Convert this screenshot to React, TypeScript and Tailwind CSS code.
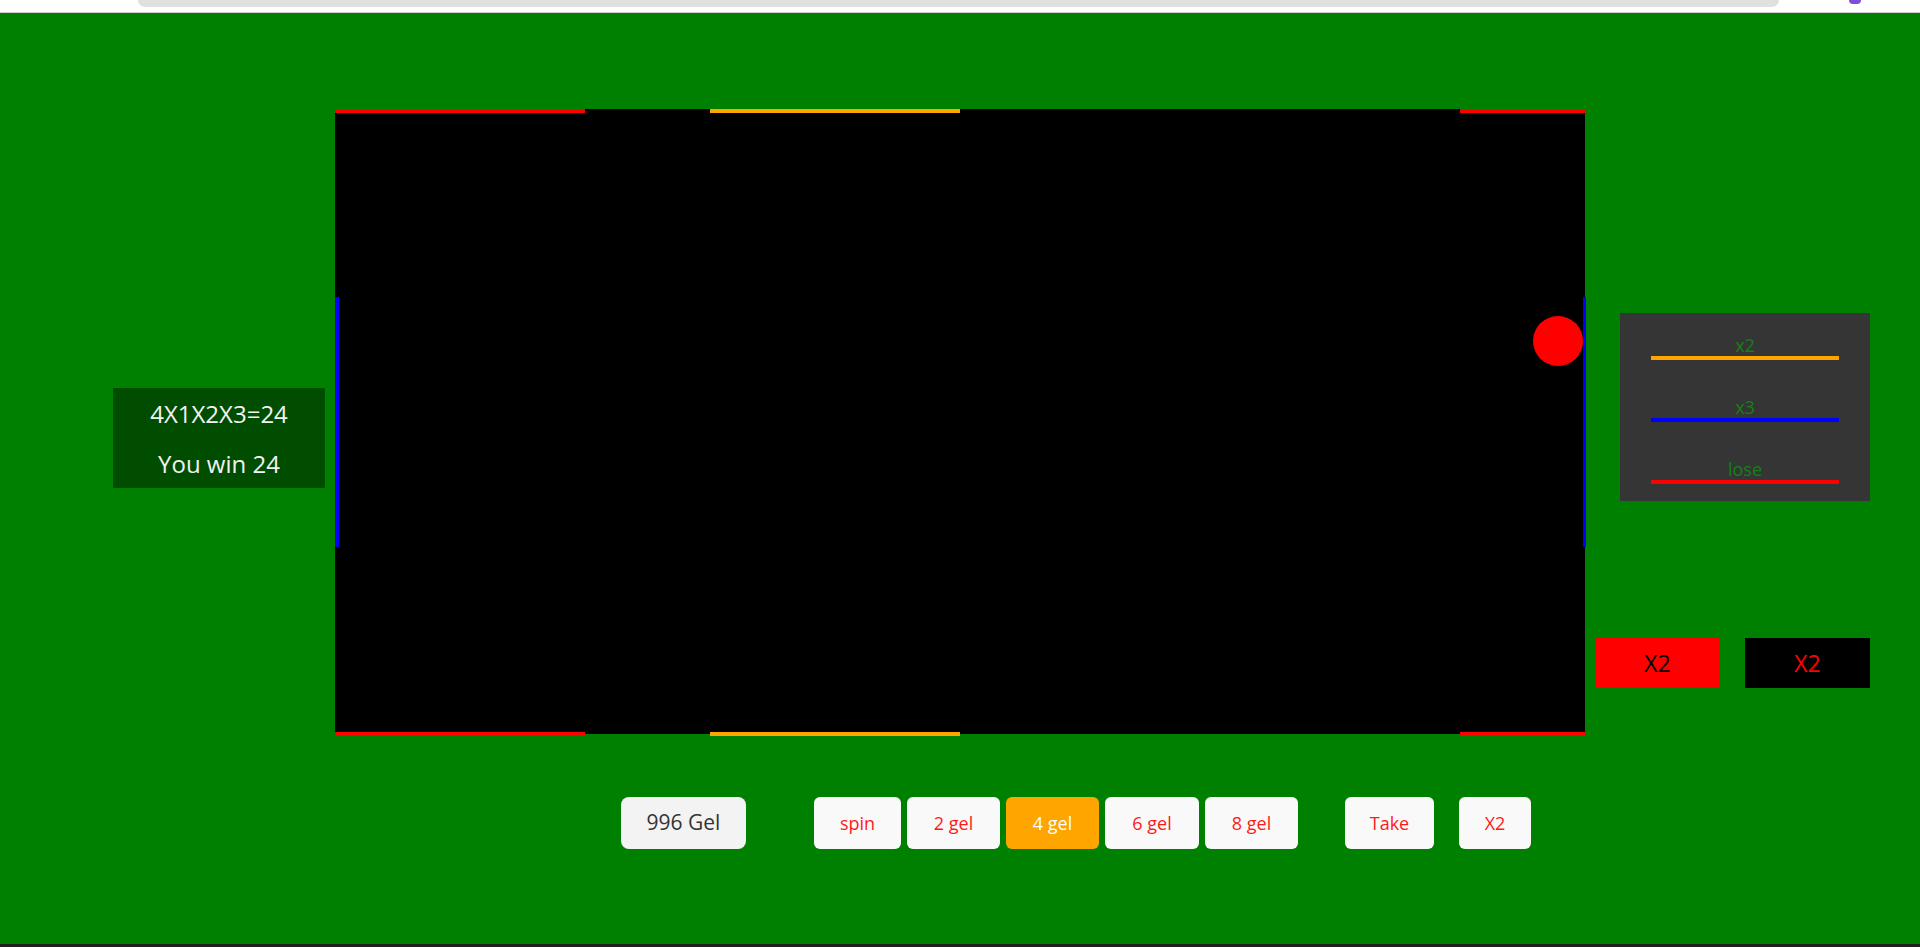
const FONT = "font-['Open_Sans','Liberation_Sans',sans-serif]";

const BETS = [
  { label: "spin", w: "w-[87px]", active: false },
  { label: "2 gel", w: "w-[93px]", active: false },
  { label: "4 gel", w: "w-[93px]", active: true },
  { label: "6 gel", w: "w-[94px]", active: false },
  { label: "8 gel", w: "w-[93px]", active: false },
];

const LEGEND = [
  { label: "x2", color: "bg-[#ffa500]" },
  { label: "x3", color: "bg-[#0000ff]" },
  { label: "lose", color: "bg-[#ff0000]" },
];

function Board() {
  return (
    <div className="relative h-[625px] w-[1250px] shrink-0 bg-black">
      {/* edge segments */}
      <div className="absolute left-0 top-0 h-[4px] w-[250px] bg-[#ff0000]" />
      <div className="absolute left-[375px] top-0 h-[4px] w-[250px] bg-[#ffa500]" />
      <div className="absolute left-[1125px] top-0 h-[4px] w-[125px] bg-[#ff0000]" />
      <div className="absolute left-0 top-[623px] h-[4px] w-[250px] bg-[#ff0000]" />
      <div className="absolute left-[375px] top-[623px] h-[4px] w-[250px] bg-[#ffa500]" />
      <div className="absolute left-[1125px] top-[623px] h-[4px] w-[125px] bg-[#ff0000]" />
      <div className="absolute left-0 top-[188px] h-[250px] w-[4px] bg-[#0000ff]" />
      <div className="absolute left-[1248px] top-[188px] h-[250px] w-[3px] bg-[#0000ff]" />
      {/* ball */}
      <div className="absolute left-[1198px] top-[207px] h-[50px] w-[50px] rounded-full bg-[#ff0000]" />
    </div>
  );
}

export default function App() {
  return (
    <div className={`flex h-[947px] w-[1920px] flex-col overflow-hidden bg-[#008000] ${FONT}`}>
      <div className="h-[13px] shrink-0 border-b border-[#cfcfcf] bg-white">
        <div className="flex">
          <div className="ml-[138px] h-[7px] w-[1641px] rounded-b-[10px] bg-[#e0e0e0]" />
          <div className="ml-[70px] h-[4px] w-[12px] rounded-b-full bg-[#7b4fd6]" />
        </div>
      </div>

      <div className="flex flex-1 flex-col">
        <div className="mt-[96px] flex items-start">
          <div className="ml-[113px] mt-[279px] flex h-[100px] w-[212px] flex-col items-center justify-center bg-[#004d00] pt-[2px] text-[24px] leading-[50px] text-[#f2f2f2]">
            <div>4X1X2X3=24</div>
            <div>You win 24</div>
          </div>

          <div className="ml-[10px]">
            <Board />
          </div>

          <div className="ml-[10px] flex flex-col">
            <div className="ml-[25px] mt-[204px] flex h-[188px] w-[250px] flex-col gap-[37px] bg-[#353535] px-[31px] pt-[22px]">
              {LEGEND.map(({ label, color }) => (
                <div key={label} className="flex flex-col items-center">
                  <div className="h-[20px] text-[18px] leading-[20px] text-[#158015]">{label}</div>
                  <div className={`mt-[1px] h-[4px] w-full ${color}`} />
                </div>
              ))}
            </div>
            <div className="mt-[137px] flex gap-[25px]">
              <div className="flex h-[50px] w-[125px] items-center justify-center bg-[#ff0000] text-[23px] text-black">X2</div>
              <div className="flex h-[50px] w-[125px] items-center justify-center bg-black text-[23px] text-[#ff0000]">X2</div>
            </div>
          </div>
        </div>

        <div className="mt-[63px] flex items-center">
          <button className="ml-[621px] h-[52px] w-[125px] rounded-[8px] bg-[#f3f3f3] text-[21px] text-[#333]">996 Gel</button>
          <div className="ml-[68px] flex gap-[6px]">
            {BETS.map(({ label, w, active }) => (
              <button
                key={label}
                className={`h-[52px] ${w} rounded-[6px] text-[18px] ${active ? "bg-[#ffa500] text-white" : "bg-[#f9f9f9] text-[#ff1a1a]"}`}
              >
                {label}
              </button>
            ))}
          </div>
          <button className="ml-[47px] h-[52px] w-[89px] rounded-[6px] bg-[#f9f9f9] text-[18px] text-[#ff1a1a]">Take</button>
          <button className="ml-[25px] h-[52px] w-[72px] rounded-[6px] bg-[#f9f9f9] text-[18px] text-[#ff1a1a]">X2</button>
        </div>
      </div>

      <div className="h-[3px] shrink-0 bg-[#202020]" />
    </div>
  );
}
